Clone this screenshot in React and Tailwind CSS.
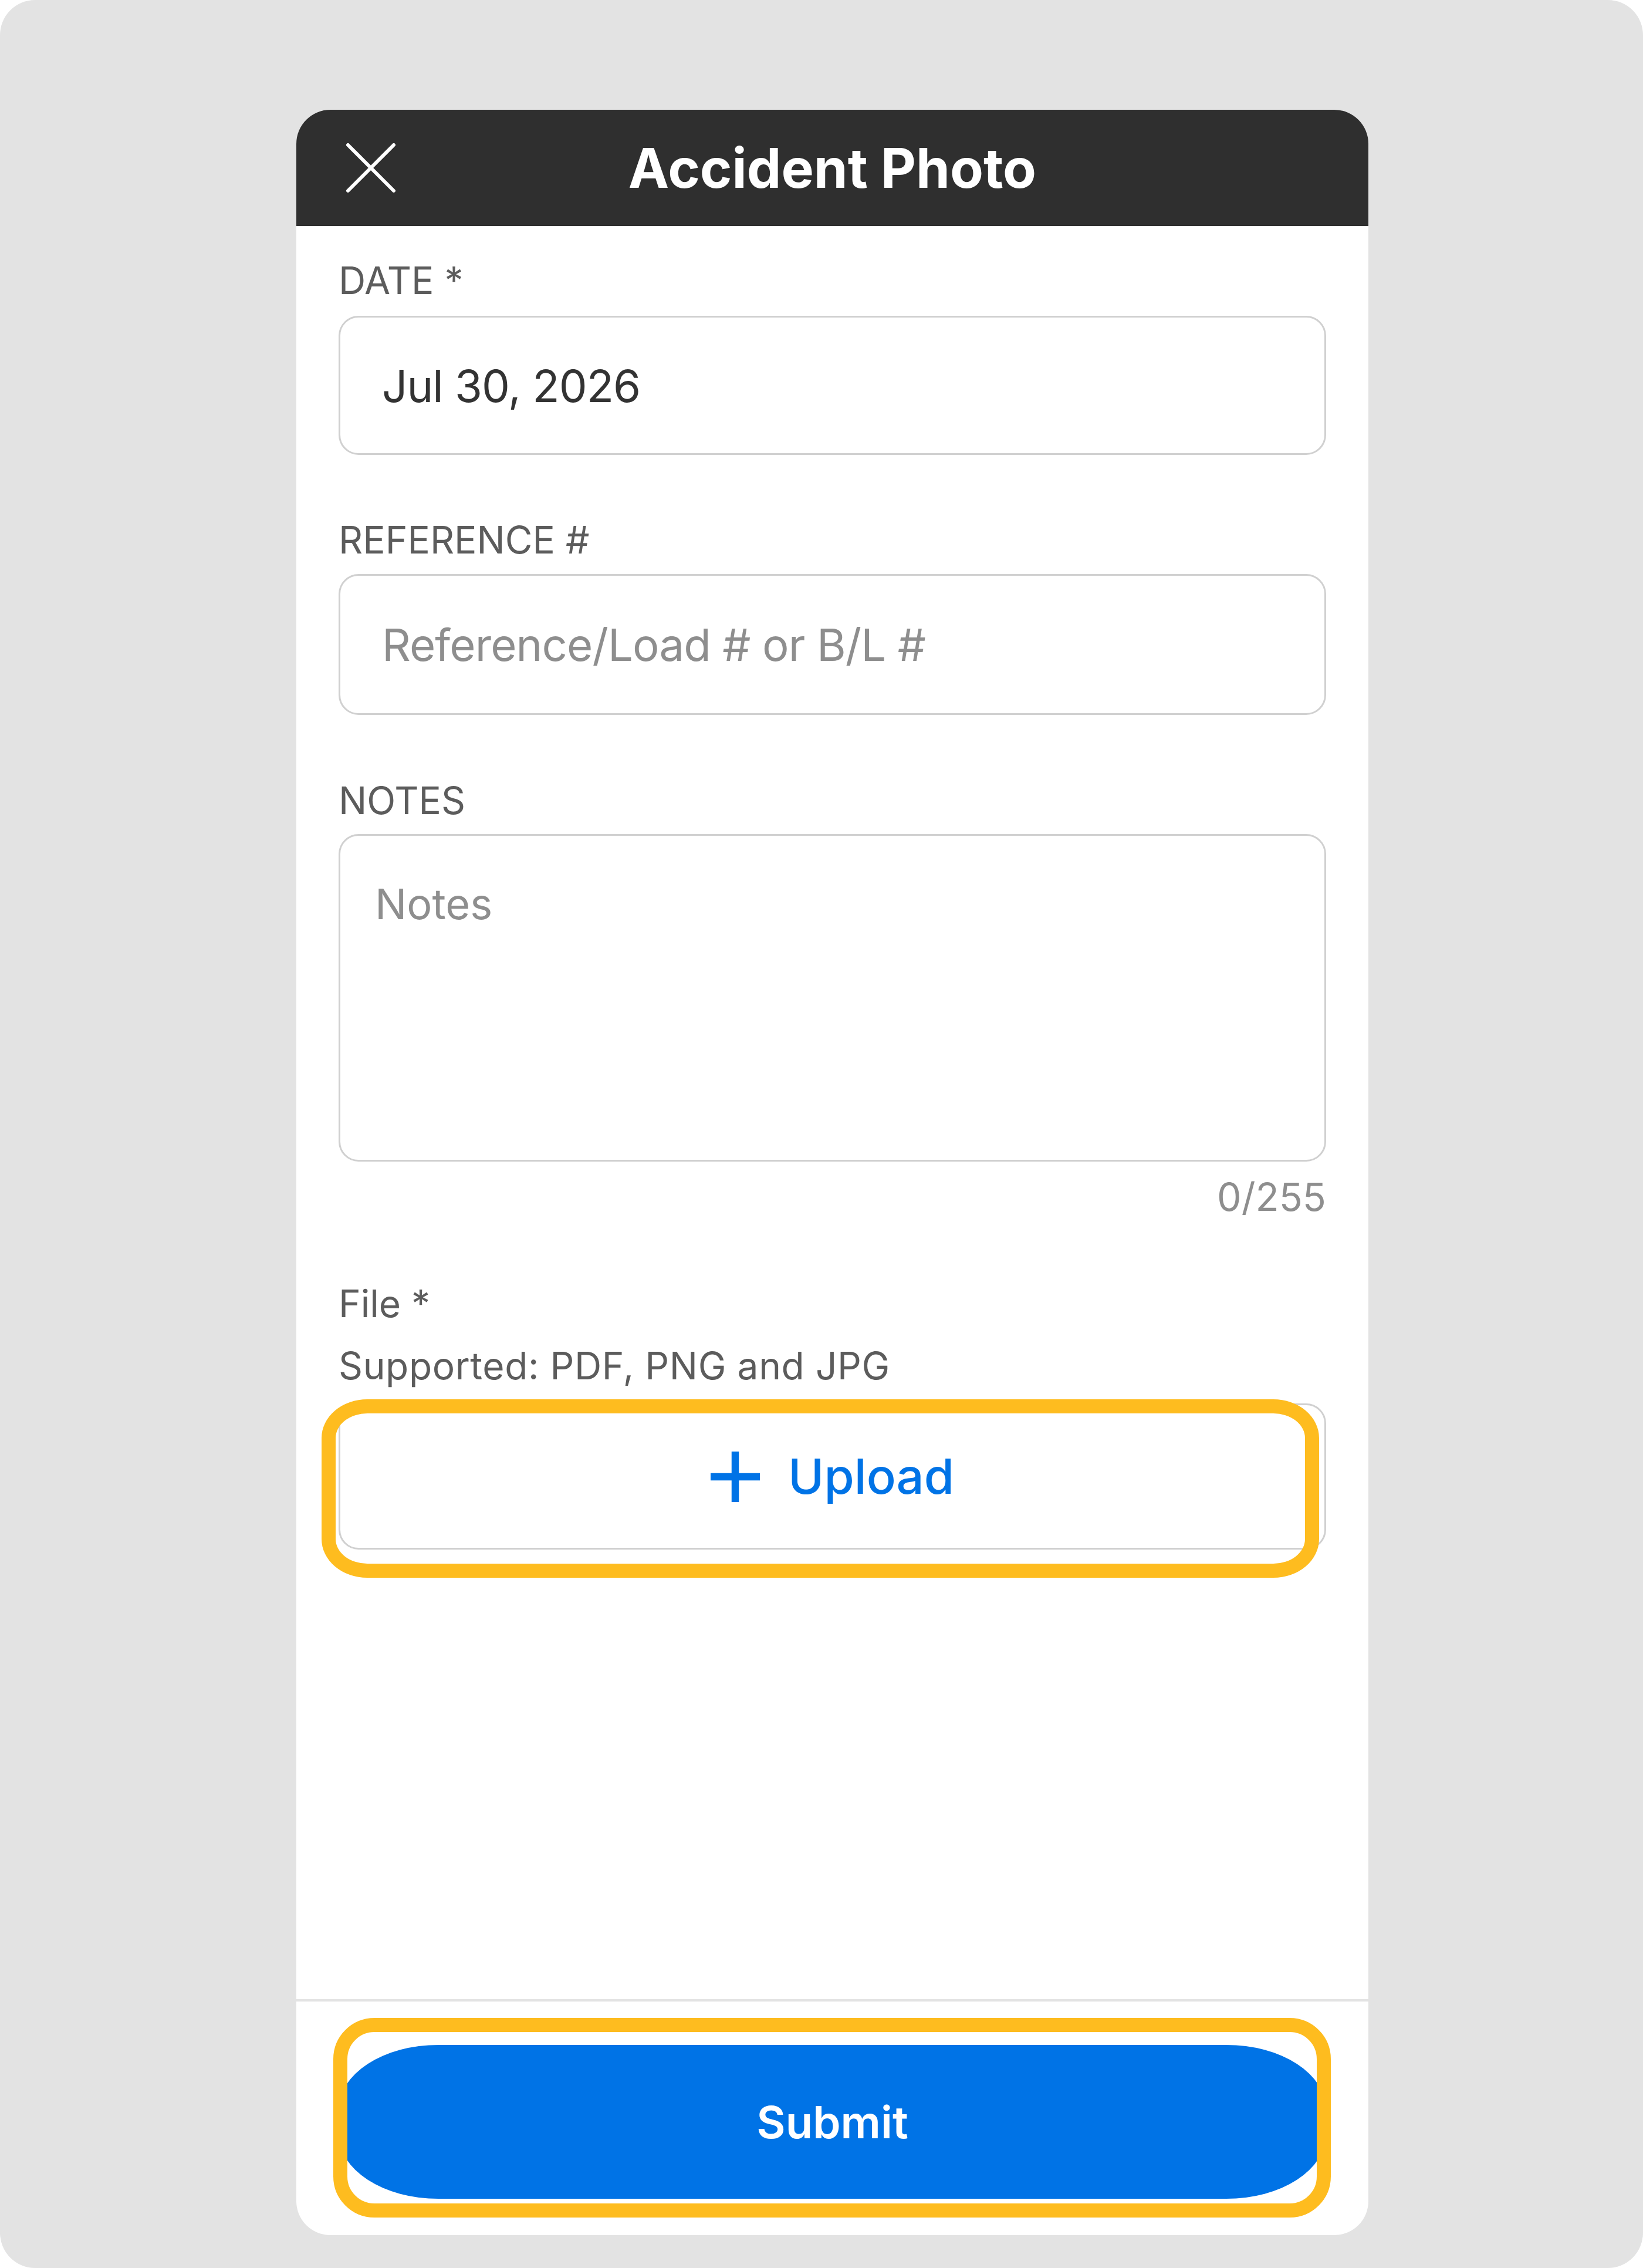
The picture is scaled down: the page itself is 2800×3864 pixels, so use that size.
import React from "react";

function CloseIcon() {
  return (
    <svg width="86" height="84" viewBox="0 0 86 84" fill="none">
      <path d="M4 3 L82 81 M82 3 L4 81" stroke="#ffffff" strokeWidth="6" strokeLinecap="round" />
    </svg>
  );
}

function PlusIcon() {
  return (
    <svg width="84" height="86" viewBox="0 0 84 86" fill="none">
      <path d="M42 0 V86 M0 43 H84" stroke="#0073e6" strokeWidth="12.5" />
    </svg>
  );
}

function Label({ children, className = "" }) {
  return (
    <div className={`text-[64px] leading-[78px] text-[#5c5c5c] ${className}`}>{children}</div>
  );
}

export default function App() {
  return (
    <div className="w-[2800px] h-[3864px] bg-white font-['Inter',sans-serif]">
      <div className="w-full h-full bg-[#e3e3e3] rounded-[60px] pt-[187px] pl-[505px]">
        <div className="w-[1827px] h-[3621px] bg-white rounded-[58px] flex flex-col overflow-hidden">
          {/* header bar */}
          <div className="h-[198px] shrink-0 bg-[#2f2f2f] grid grid-cols-[1fr_auto_1fr] items-center">
            <div className="pl-[84px] flex items-center">
              <CloseIcon />
            </div>
            <div className="text-white font-bold text-[93px] leading-none">Accident Photo</div>
            <div />
          </div>

          {/* form body */}
          <div className="flex-1 px-[72px] pt-[54px] flex flex-col">
            <Label>DATE *</Label>
            <div className="mt-[21px] h-[237px] border-[3px] border-[#d0d0d0] rounded-[34px] flex items-center pl-[71px] text-[76px] tracking-[-1px] text-[#333333]">
              Jul 30, 2026
            </div>

            <Label className="mt-[106px]">REFERENCE #</Label>
            <div className="mt-[19px] h-[240px] border-[3px] border-[#d0d0d0] rounded-[34px] flex items-center pl-[71px] text-[76px] tracking-[-0.9px] text-[#8e8e8e]">
              Reference/Load # or B/L #
            </div>

            <Label className="mt-[107px]">NOTES</Label>
            <div className="mt-[18px] h-[558px] border-[3px] border-[#d0d0d0] rounded-[34px] pl-[59px] pt-[72px]">
              <div className="text-[72px] leading-[88px] text-[#8e8e8e]">Notes</div>
            </div>
            <div className="mt-[21px] text-right text-[66px] leading-[78px] text-[#8e8e8e]">0/255</div>

            <Label className="mt-[104px]">File *</Label>
            <Label className="mt-[28px] tracking-[0.6px]">Supported: PDF, PNG and JPG</Label>

            <div className="relative mt-[25px] h-[249px] border-[3px] border-[#d0d0d0] rounded-[34px] flex items-center justify-center gap-[48px]">
              <PlusIcon />
              <span className="text-[83px] leading-none font-medium text-[#0073e6]">Upload</span>
              <div className="absolute left-[-32px] top-[-10px] w-[1700px] h-[304px] border-[24px] border-[#febc1f] rounded-[78px/66px] pointer-events-none" />
            </div>
          </div>

          {/* footer with submit */}
          <div className="shrink-0 border-t-[4px] border-[#e3e3e3] pt-[74px] pb-[62px] px-[72px]">
            <div className="relative">
              <button className="w-full h-[262px] bg-[#0073e6] rounded-[170px/110px] text-white font-semibold text-[76px]">
                Submit
              </button>
              <div className="absolute left-[-9px] top-[-46px] w-[1700px] h-[340px] border-[24px] border-[#febc1f] rounded-[70px] pointer-events-none" />
            </div>
          </div>
        </div>
      </div>
    </div>
  );
}
